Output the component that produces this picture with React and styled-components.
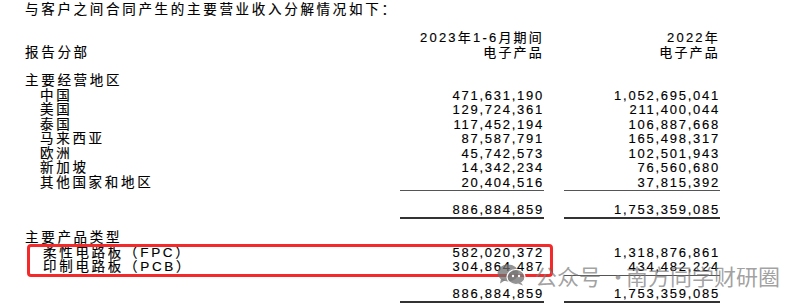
import styled, { createGlobalStyle } from "styled-components";

const GlobalStyle = createGlobalStyle`
  html, body {
    margin: 0;
    padding: 0;
    background: #fff;
  }
  body {
    font-family: "Liberation Sans", "Noto Sans CJK SC", sans-serif;
    color: #000;
  }
`;

const Page = styled.div`
  position: relative;
  width: 807px;
  height: 308px;
  overflow: hidden;
  padding-left: 25px;
  box-sizing: border-box;
  font-size: 13px;
  -webkit-text-stroke: 0.15px #000;
`;

const Title = styled.div`
  margin-top: 3px;
  height: 14.5px;
  line-height: 14.5px;
  font-size: 13.5px;
  letter-spacing: 2.7px;
  white-space: nowrap;
`;

const Row = styled.div`
  display: grid;
  grid-template-columns: 355px 144px 156px;
  column-gap: 20px;
  height: 14.5px;
  line-height: 14.5px;
  margin-top: ${(p) => p.$gap || 0}px;
`;

const Label = styled.div`
  padding-left: ${(p) => p.$indent || 0}px;
  font-size: 13.5px;
  letter-spacing: 2.7px;
  white-space: nowrap;
`;

const Num = styled.div`
  text-align: right;
  letter-spacing: 1.75px;
  white-space: nowrap;
  box-sizing: border-box;
  border-bottom: ${(p) =>
    p.$rule === "single"
      ? "1px solid #555"
      : p.$rule === "double"
      ? "2px solid #333"
      : "none"};
`;

const HeadCell = styled(Num)`
  letter-spacing: 2.2px;
`;

const Group = styled.div`
  position: relative;
`;

const Highlight = styled.div`
  position: absolute;
  top: -1.5px;
  left: 2px;
  width: 526px;
  height: 33px;
  border: 3px solid #f42a2a;
  border-radius: 4px;
  box-sizing: border-box;
  pointer-events: none;
`;

const Watermark = styled.div`
  position: absolute;
  left: 497px;
  top: 263px;
  display: flex;
  align-items: center;
  gap: 6px;
  color: rgba(120, 120, 120, 0.7);
  -webkit-text-stroke: 0;
  font-family: "Noto Sans CJK SC", sans-serif;
  font-size: 22px;
  line-height: 24px;
  white-space: nowrap;
  pointer-events: none;
`;

const Dot = styled.span`
  display: inline-block;
  width: 13px;
  text-align: center;
`;

const WeChatIcon = () => (
  <svg width="29" height="22" viewBox="0 0 29 22" style={{ marginRight: 3 }}>
    <ellipse cx="11" cy="9" rx="10.5" ry="8.5" fill="rgba(110,110,110,0.75)" />
    <path d="M4 15 L3 19.5 L8.5 16 Z" fill="rgba(110,110,110,0.75)" />
    <ellipse cx="19" cy="13" rx="9" ry="7.5" fill="rgba(120,120,120,0.8)" stroke="#fff" strokeWidth="1.2" />
    <path d="M24 18.5 L26 21.5 L21 19.5 Z" fill="rgba(120,120,120,0.8)" />
    <circle cx="16" cy="12" r="1.2" fill="#fff" />
    <circle cx="22" cy="12" r="1.2" fill="#fff" />
  </svg>
);

const regions = [
  ["中国", "471,631,190", "1,052,695,041"],
  ["美国", "129,724,361", "211,400,044"],
  ["泰国", "117,452,194", "106,887,668"],
  ["马来西亚", "87,587,791", "165,498,317"],
  ["欧洲", "45,742,573", "102,501,943"],
  ["新加坡", "14,342,234", "76,560,680"],
  ["其他国家和地区", "20,404,516", "37,815,392"],
];

const products = [
  ["柔性电路板（FPC）", "582,020,372", "1,318,876,861"],
  ["印制电路板（PCB）", "304,864,487", "434,482,224"],
];

export default function App() {
  return (
    <>
      <GlobalStyle />
      <Page>
        <Title>与客户之间合同产生的主要营业收入分解情况如下：</Title>

        <Row $gap={13.5}>
          <Label />
          <HeadCell>2023年1-6月期间</HeadCell>
          <HeadCell>2022年</HeadCell>
        </Row>
        <Row>
          <Label>报告分部</Label>
          <HeadCell>电子产品</HeadCell>
          <HeadCell>电子产品</HeadCell>
        </Row>

        <Row $gap={14}>
          <Label>主要经营地区</Label>
        </Row>
        {regions.map(([name, a, b], i) => {
          const last = i === regions.length - 1;
          return (
            <Row key={name}>
              <Label $indent={15}>{name}</Label>
              <Num $rule={last ? "single" : null}>{a}</Num>
              <Num $rule={last ? "single" : null}>{b}</Num>
            </Row>
          );
        })}
        <Row $gap={12.5}>
          <Label />
          <Num $rule="double">886,884,859</Num>
          <Num $rule="double">1,753,359,085</Num>
        </Row>

        <Row $gap={14}>
          <Label>主要产品类型</Label>
        </Row>
        <Group>
          {products.map(([name, a, b], i) => {
            const last = i === products.length - 1;
            return (
              <Row key={name}>
                <Label $indent={18}>{name}</Label>
                <Num $rule={last ? "single" : null}>{a}</Num>
                <Num $rule={last ? "single" : null}>{b}</Num>
              </Row>
            );
          })}
          <Highlight />
        </Group>
        <Row $gap={12}>
          <Label />
          <Num $rule="double">886,884,859</Num>
          <Num $rule="double">1,753,359,085</Num>
        </Row>

        <Watermark>
          <WeChatIcon />
          <span>公众号</span>
          <Dot>·</Dot>
          <span>南方同学财研圈</span>
        </Watermark>
      </Page>
    </>
  );
}
